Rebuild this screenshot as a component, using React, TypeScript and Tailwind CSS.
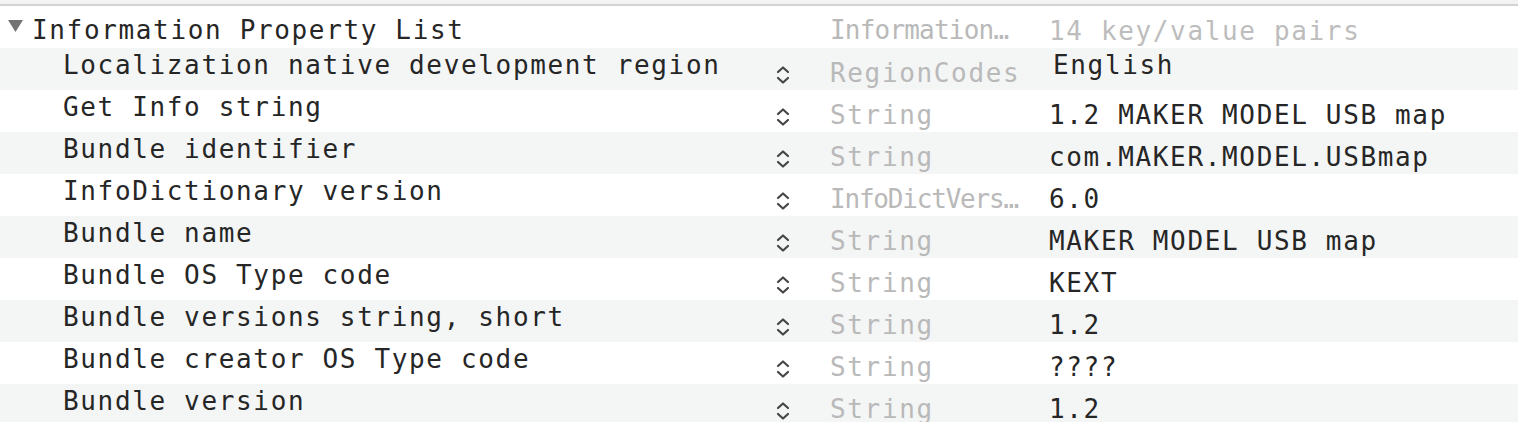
import React from "react";

type Row = {
  key: string;
  type: string;
  value: string;
  typeTrack?: string;
  editing?: boolean;
};

const ROWS: Row[] = [
  { key: "Localization native development region", type: "RegionCodes", value: "English", editing: true },
  { key: "Get Info string", type: "String", value: "1.2 MAKER MODEL USB map" },
  { key: "Bundle identifier", type: "String", value: "com.MAKER.MODEL.USBmap" },
  { key: "InfoDictionary version", type: "InfoDictVers…", value: "6.0", typeTrack: "tracking-[-1.2px]" },
  { key: "Bundle name", type: "String", value: "MAKER MODEL USB map" },
  { key: "Bundle OS Type code", type: "String", value: "KEXT" },
  { key: "Bundle versions string, short", type: "String", value: "1.2" },
  { key: "Bundle creator OS Type code", type: "String", value: "????" },
  { key: "Bundle version", type: "String", value: "1.2" },
];

const mono = "font-['DejaVu_Sans_Mono','Liberation_Mono',monospace] text-[26px] leading-[30px] tracking-[1.65px]";

function Stepper() {
  return (
    <svg width="14" height="18" viewBox="0 0 14 18" fill="none" stroke="#454545" strokeWidth="2.2" strokeLinecap="round" strokeLinejoin="round">
      <polyline points="2,6 7,1.5 12,6" />
      <polyline points="2,12 7,16.5 12,12" />
    </svg>
  );
}

export default function App() {
  return (
    <div className={`w-[1518px] h-[422px] overflow-hidden bg-white ${mono}`}>
      <div className="h-[4px] bg-[#f3f3f3]" />
      <div className="h-[2px] bg-[#d3d3d3]" />

      {/* root row */}
      <div className="flex h-[42px] bg-white">
        <div className="w-[776px] flex items-start">
          <svg className="ml-[8px] mt-[14px]" width="15" height="12" viewBox="0 0 15 12">
            <polygon points="0,0 15,0 7.5,12" fill="#737373" />
          </svg>
          <span className="ml-[9px] pt-[9px] text-[#262626] whitespace-nowrap">Information Property List</span>
        </div>
        <div className="w-[54px]" />
        <div className="w-[219px] pt-[9px] text-[#b9b9b9] whitespace-nowrap tracking-[-0.8px]">
          Information…
        </div>
        <div className="flex-1 pt-[10px] text-[#bdbdbd] whitespace-nowrap">14 key/value pairs</div>
      </div>

      {ROWS.map((r, i) => (
        <div key={r.key} className={`flex h-[42px] ${i % 2 === 0 ? "bg-[#f4f5f5]" : "bg-white"}`}>
          <div className="w-[776px] pl-[63px] pt-[2px] text-[#262626] whitespace-nowrap">{r.key}</div>
          <div className="w-[54px] pt-[18px]">
            <Stepper />
          </div>
          <div className={`w-[219px] pt-[10px] text-[#b9b9b9] whitespace-nowrap overflow-hidden ${r.typeTrack ?? ""}`}>
            {r.type}
          </div>
          <div className={`flex-1 whitespace-nowrap text-[#262626] ${r.editing ? "pt-[2px] pl-[4px]" : "pt-[10px]"}`}>
            {r.value}
          </div>
        </div>
      ))}
    </div>
  );
}
